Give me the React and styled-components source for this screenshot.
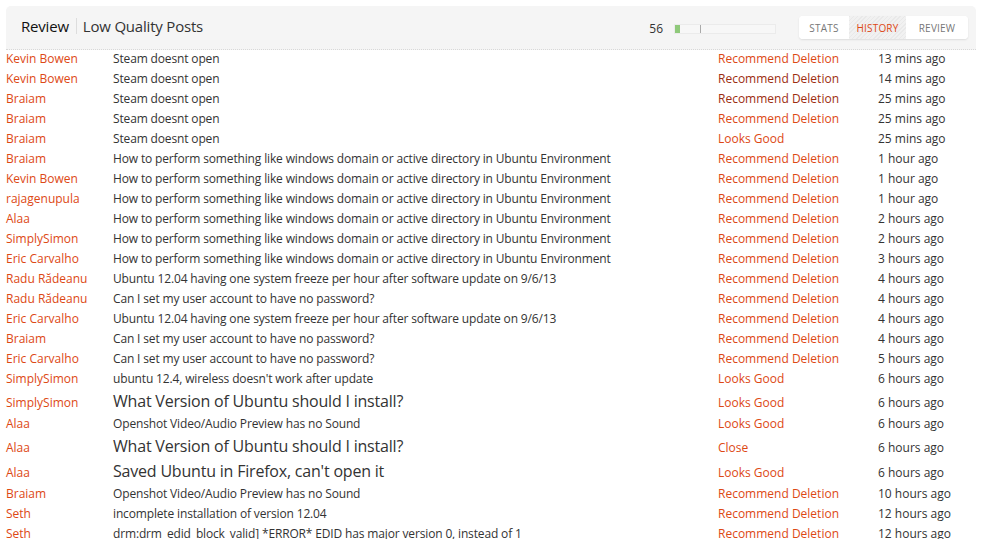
import React from "react";
import styled, { createGlobalStyle } from "styled-components";

const Global = createGlobalStyle`
  html, body { margin: 0; padding: 0; background: #fff; }
  body { font-family: "Open Sans", "Noto Sans", sans-serif; color: #333; }
`;

const Page = styled.div`
  padding: 6px 7px 0 6px;
  width: 970px;
`;

const Header = styled.div`
  display: flex;
  align-items: center;
  height: 43px;
  background: #f5f5f5;
  border-radius: 5px 5px 0 0;
  border-bottom: 1px dotted #d8d8d8;
  padding: 0 8px 0 15px;
`;

const Title = styled.h1`
  margin: 0;
  padding-bottom: 3px;
  font-size: 15px;
  font-weight: 400;
  color: #111;
  display: flex;
  align-items: center;
  flex: 1;
  letter-spacing: -0.2px;
`;

const Sep = styled.span`
  width: 1px;
  height: 16px;
  background: #ddd;
  margin: 0 6px 0 7px;
`;

const Sub = styled.span`
  color: #333;
`;

const Count = styled.span`
  font-size: 12px;
  color: #333;
  margin-right: 11px;
  margin-top: 2px;
`;

const Bar = styled.div`
  position: relative;
  width: 100px;
  height: 8px;
  background: #f7f7f7;
  border: 1px solid #ebebeb;
  margin-right: 23px;
  margin-top: 2px;
`;

const Fill = styled.div`
  height: 100%;
  background: #8fc97a;
`;

const Tick = styled.div`
  position: absolute;
  left: 25px;
  top: 0;
  bottom: 0;
  width: 1px;
  background: #aaa;
`;

const Tabs = styled.div`
  display: flex;
  background: #fff;
  border-radius: 4px;
  box-shadow: 0 1px 2px rgba(0, 0, 0, 0.1);
  height: 23px;
  overflow: hidden;
`;

const Tab = styled.div`
  display: flex;
  align-items: center;
  justify-content: center;
  width: ${(p) => p.$w}px;
  font-size: 10px;
  letter-spacing: 0.2px;
  color: ${(p) => (p.$active ? "#dd4814" : "#777")};
  background: ${(p) =>
    p.$active
      ? "repeating-linear-gradient(135deg, #e9e9e9 0 1px, #f1f1f1 1px 3px)"
      : "#fff"};
`;

const Table = styled.table`
  border-collapse: collapse;
  width: 100%;
`;

const Row = styled.tr`
  height: ${(p) => (p.$big ? 25 : 20)}px;
`;

const Cell = styled.td`
  padding: 0;
  vertical-align: baseline;
  font-size: 12px;
  white-space: nowrap;
  width: ${(p) => p.$w || "auto"};
`;

const Link = styled.a`
  color: ${(p) => (p.$visited ? "#9c2d10" : "#dd4814")};
  text-decoration: none;
`;

const PostTitle = styled.span`
  color: #333;
  font-size: ${(p) => (p.$big ? "16px" : "12px")};
  letter-spacing: ${(p) => (p.$big ? "-0.2px" : "-0.15px")};
`;

const Time = styled.span`
  color: #333;
`;

const H = "How to perform something like windows domain or active directory in Ubuntu Environment";
const U = "Ubuntu 12.04 having one system freeze per hour after software update on 9/6/13";
const C = "Can I set my user account to have no password?";
const RD = "Recommend Deletion";

const rows = [
  ["Kevin Bowen", "Steam doesnt open", false, RD, false, "13 mins ago"],
  ["Kevin Bowen", "Steam doesnt open", false, RD, true, "14 mins ago"],
  ["Braiam", "Steam doesnt open", false, RD, true, "25 mins ago"],
  ["Braiam", "Steam doesnt open", false, RD, false, "25 mins ago"],
  ["Braiam", "Steam doesnt open", false, "Looks Good", false, "25 mins ago"],
  ["Braiam", H, false, RD, false, "1 hour ago"],
  ["Kevin Bowen", H, false, RD, false, "1 hour ago"],
  ["rajagenupula", H, false, RD, false, "1 hour ago"],
  ["Alaa", H, false, RD, false, "2 hours ago"],
  ["SimplySimon", H, false, RD, false, "2 hours ago"],
  ["Eric Carvalho", H, false, RD, false, "3 hours ago"],
  ["Radu Rădeanu", U, false, RD, false, "4 hours ago"],
  ["Radu Rădeanu", C, false, RD, false, "4 hours ago"],
  ["Eric Carvalho", U, false, RD, false, "4 hours ago"],
  ["Braiam", C, false, RD, false, "4 hours ago"],
  ["Eric Carvalho", C, false, RD, false, "5 hours ago"],
  ["SimplySimon", "ubuntu 12.4, wireless doesn't work after update", false, "Looks Good", false, "6 hours ago"],
  ["SimplySimon", "What Version of Ubuntu should I install?", true, "Looks Good", false, "6 hours ago"],
  ["Alaa", "Openshot Video/Audio Preview has no Sound", false, "Looks Good", false, "6 hours ago"],
  ["Alaa", "What Version of Ubuntu should I install?", true, "Close", false, "6 hours ago"],
  ["Alaa", "Saved Ubuntu in Firefox, can't open it", true, "Looks Good", false, "6 hours ago"],
  ["Braiam", "Openshot Video/Audio Preview has no Sound", false, RD, false, "10 hours ago"],
  ["Seth", "incomplete installation of version 12.04", false, RD, false, "12 hours ago"],
  ["Seth", "drm:drm_edid_block_valid] *ERROR* EDID has major version 0, instead of 1", false, RD, false, "12 hours ago"],
];

export default function App() {
  return (
    <>
      <Global />
      <Page>
        <Header>
          <Title>
            Review<Sep />
            <Sub>Low Quality Posts</Sub>
          </Title>
          <Count>56</Count>
          <Bar>
            <Fill style={{ width: "5%" }} />
            <Tick />
          </Bar>
          <Tabs>
            <Tab $w={50}>STATS</Tab>
            <Tab $w={57} $active>HISTORY</Tab>
            <Tab $w={62}>REVIEW</Tab>
          </Tabs>
        </Header>
        <Table>
          <tbody>
            {rows.map(([name, title, big, action, visited, time], i) => (
              <Row key={i} $big={big}>
                <Cell $w="107px"><Link href="#">{name}</Link></Cell>
                <Cell $w="605px"><PostTitle $big={big}>{title}</PostTitle></Cell>
                <Cell $w="160px"><Link href="#" $visited={visited}>{action}</Link></Cell>
                <Cell><Time>{time}</Time></Cell>
              </Row>
            ))}
          </tbody>
        </Table>
      </Page>
    </>
  );
}
